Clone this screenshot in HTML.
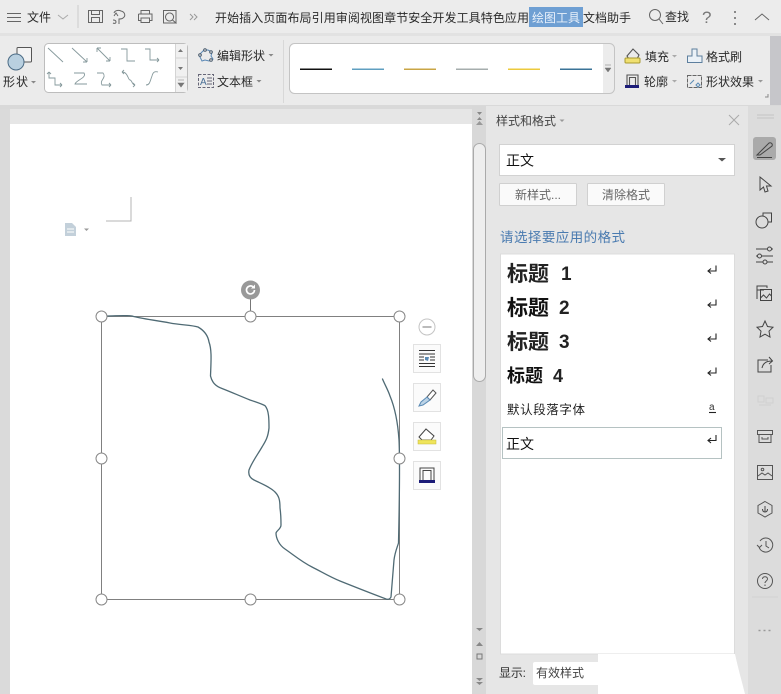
<!DOCTYPE html>
<html><head><meta charset="utf-8">
<style>
html,body{margin:0;padding:0;background:#fff}
svg{display:block;width:781px;height:694px}
text{font-family:"Liberation Sans","Noto Sans CJK SC",sans-serif;font-size:12px;fill:#2a2a2a}
.i{fill:none;stroke:#666;stroke-width:1}
.l{fill:none;stroke:#86999c;stroke-width:.9}
.s{fill:none;stroke:#555;stroke-width:1.1}
</style></head><body>
<svg xmlns="http://www.w3.org/2000/svg" width="781" height="694" viewBox="0 0 781 694">
<!-- backgrounds -->
<rect width="781" height="694" fill="#dedede"/>
<rect width="781" height="33" fill="#ececec"/>
<rect y="33" width="781" height="3" fill="#e2e2e2"/>
<rect y="36" width="781" height="69" fill="#ebebeb"/>
<rect y="105" width="781" height="4" fill="#d9d9d9"/>
<rect y="109" width="472" height="15" fill="#e6e6e6"/>
<rect y="109" width="10" height="585" fill="#dadada"/>
<rect x="770" y="36" width="11" height="69" fill="#c6c6ca"/>
<rect x="10" y="124" width="462" height="570" fill="#fff"/>
<rect x="472" y="106" width="14" height="588" fill="#d8d8d8"/>
<rect x="486" y="106" width="262" height="588" fill="#e6e6e6"/>
<rect x="748" y="106" width="33" height="588" fill="#dcdcdc"/>

<!-- title row -->
<path class="i" d="M7 13.500H21M7 17.500H21M7 21.500H21"/>
<text x="27" y="21.500">文件</text>
<path d="M58 15l5 4 5-4" fill="none" stroke="#aaa"/>
<path d="M78 5V28" stroke="#ccc"/>
<path class="i" d="M88.500 10.500H102.500V22.500H88.500ZM91.500 10.500V14.500H99.500V10.500M91.500 22.500V17.500H99.500V22.500"/>
<path class="i" d="M114 13c1-3 5-3 7-2 4 1 5 5 2 7-1 1-3 1-4 1v5M114 16l2-3 2 3M113 20c2 0 3 1 3 2s-1 2-3 1"/>
<path class="i" d="M141 14V10.500H149.500V14M138.500 14H152V20.500H149.500M138.500 14V20.500H141M141 18H149.500V22.500H141Z"/>
<path class="i" d="M163.500 10.500H176V23H163.500ZM169.500 13a4 4 0 1 0 .1 0M172.500 20l4 3.500"/>
<path d="M190 14l3 3-3 3M194 14l3 3-3 3" fill="none" stroke="#999"/>
<text x="215" y="22" textLength="314">开始插入页面布局引用审阅视图章节安全开发工具特色应用</text>
<rect x="529" y="7" width="54" height="20" fill="#6e9fd3"/>
<text x="532" y="22" style="fill:#e8f0fa" textLength="48">绘图工具</text>
<text x="583" y="22" textLength="48">文档助手</text>
<circle cx="655" cy="15" r="5.500" class="i"/><path class="i" d="M659 19l4 5"/>
<text x="665" y="21" textLength="24">查找</text>
<text x="702" y="23" style="font-size:17px;fill:#777">?</text>
<path d="M735 11v2M735 17v2M735 23v2" stroke="#666" stroke-width="1.500"/>
<path d="M755 20l7-6 7 6" class="i"/>

<!-- shape icon -->
<rect x="17" y="47.500" width="14.500" height="14.500" rx="1" fill="#f3f3f3" stroke="#555"/>
<circle cx="16" cy="62" r="8" fill="#b9d0e0" stroke="#4b6b85"/>
<text x="3" y="86" textLength="25">形状</text>
<path d="M31 81h5l-2.500 2.500z" fill="#888"/>

<!-- shape gallery -->
<rect x="44.500" y="43.500" width="143" height="49" rx="4" fill="#fff" stroke="#bdbdbd"/>
<rect x="176" y="44" width="11" height="48" fill="#f0f0f0"/>
<path d="M175.500 44V92M176 58H187M176 77H187" stroke="#d4d4d4"/>
<path d="M178 52h5l-2.500-3zM178 67h5l-2.500 3z" fill="#777"/>
<path d="M178 80h6M178 83h6l-3 4z" fill="#777" stroke="#777" stroke-width=".6"/>
<path class="l" d="M48 48L63 62"/>
<path class="l" d="M72 48L87 62M87 62v-4M87 62h-4"/>
<path class="l" d="M97 48L110 61M97 48h4M97 48v4M110 61h-4M110 61v-4"/>
<path class="l" d="M121 49H127V61H135"/>
<path class="l" d="M145 49H150V60H159M159 60l-2-2M159 60l-2 2"/>
<path class="l" d="M49 72V78H55V85H62M49 72l-2 2M49 72l2 2M62 85l-2-2M62 85l-2 2"/>
<path class="l" d="M74 73H84C87 78 76 80 75 84H87"/>
<path class="l" d="M97 73H103C107 78 99 80 102 85H111M111 85l-2-2M111 85l-2 2"/>
<path class="l" d="M122 72C128 72 128 80 130 80C132 80 132 85 135 85M122 72l2-2M122 72l2 2M135 85l-2-2M135 85l-2 2"/>
<path class="l" d="M146 85C150 85 150 81 152 76C153 72 155 71 158 72"/>

<!-- edit shape / text box -->
<path d="M199 55l5-5 4 0 4 2-1 4 2 3-4 2-4-1-3 1z" fill="none" stroke="#5a88b5"/>
<circle cx="200" cy="55" r="1.300" fill="#fff" stroke="#456"/><circle cx="205" cy="50" r="1.300" fill="#fff" stroke="#456"/><circle cx="211" cy="52" r="1.300" fill="#fff" stroke="#456"/><circle cx="211" cy="60" r="1.300" fill="#fff" stroke="#456"/>
<text x="217" y="60" textLength="48">编辑形状</text>
<path d="M268.500 54h5l-2.500 2.500z" fill="#888"/>
<rect x="198.500" y="74.500" width="15" height="13" fill="none" stroke="#667" stroke-dasharray="3 1.500"/>
<text x="200" y="85" style="font-size:10px;fill:#4a6f96">A</text>
<path d="M207 78h5M207 81h5M207 84h5" stroke="#667"/>
<text x="217" y="86" textLength="36">文本框</text>
<path d="M256.500 80h5l-2.500 2.500z" fill="#888"/>
<path d="M283.500 40V103" stroke="#d8d8d8"/>

<!-- line gallery -->
<rect x="289.500" y="43.500" width="325" height="50" rx="5" fill="#ececec" stroke="#c4c4c4"/>
<path d="M603 44H295a5 5 0 0 0-5 5V88a5 5 0 0 0 5 5H603Z" fill="#fff"/>
<path d="M605 65h6M605 68h6l-3 4z" fill="#777" stroke="#777" stroke-width=".5"/>
<rect x="300" y="68.500" width="32" height="1.500" fill="#111"/>
<rect x="352" y="68.500" width="32" height="1.500" fill="#5f9fc0"/>
<rect x="404" y="68.500" width="32" height="1.500" fill="#c9a545"/>
<rect x="456" y="68.500" width="32" height="1.500" fill="#a5adad"/>
<rect x="508" y="68.500" width="32" height="1.500" fill="#ecca3c"/>
<rect x="560" y="68.500" width="32" height="1.500" fill="#3a7397"/>

<!-- fill / outline -->
<path class="s" d="M627 56l6-7 6 6-2 4h-8z"/>
<rect x="625" y="58" width="15" height="5" rx="1" fill="#f0e070" stroke="#a89a30"/>
<text x="645" y="61" textLength="24">填充</text>
<path d="M672 55h5l-2.500 2.500z" fill="#aaa"/>
<path d="M687.500 62.500V56H692V49H697V56H702V62.500Z" fill="#eaf1f7" stroke="#5d7f9e"/>
<text x="706" y="61" textLength="36">格式刷</text>
<path class="s" d="M627 85V75H638V85"/><path class="s" d="M629.500 85V77.500H635.500V85"/>
<rect x="625" y="85" width="14" height="3" fill="#1c1c78"/>
<text x="644" y="86" textLength="24">轮廓</text>
<path d="M672 80h5l-2.500 2.500z" fill="#aaa"/>
<rect x="687.500" y="75.500" width="14" height="12" fill="none" stroke="#666" stroke-dasharray="4 1"/>
<path d="M690 84l4-4M696 85l2-2 2 2-2 2z" stroke="#5b8bb5" fill="none"/>
<text x="706" y="86" textLength="48">形状效果</text>
<path d="M758 80h5l-2.500 2.500z" fill="#999"/>
<path d="M765 97h3v-3" fill="none" stroke="#888"/>

<!-- document marks -->
<path d="M131 197V221H106" fill="none" stroke="#b4b4b4"/>
<path d="M65 223H72L76 227V236H65Z" fill="#c3d0da"/>
<path d="M67 229h7M67 232h7" stroke="#fff"/>
<path d="M84 228.500h5l-2.500 2.500z" fill="#999"/>

<!-- selection -->
<rect x="101.500" y="316.500" width="298" height="283" fill="none" stroke="#808080" stroke-width="1"/>
<path d="M250.500 297V316" stroke="#777"/>
<circle cx="250.500" cy="290" r="9.500" fill="#999"/>
<path d="M254.500 290a4 4 0 1 1-1.500-3.200" fill="none" stroke="#fff" stroke-width="1.700"/>
<path d="M255 284.500v4h-4z" fill="#fff"/>
<path d="M106 316C115 316 125 315 132 316C142 319 155 320 170 323C180 325 192 325 198 327C205 331 208 336 209 342C212 350 211 362 210.500 376C212 382 215 386 222 388.500C231 392 240 396 250 400C256 402 262 404 265 405.700C269 410 269 420 269 428C268 438 265 442 262 447C258 454 252 462 249 470C248 475 250 478 254 480C262 484 270 487 275 492C279 496 280 500 280 508C281 515 281 520 281 525C281 529 277 530 276 533C276 538 279 545 285 549C295 556 302 562 312 567C322 572 330 577 340 581C355 587 370 593 387 599.300C389 599.500 390 599 391 597C392 585 393 572 394 560C395 552 397 548 398.500 543C399 520 399.500 495 399.500 470C399.500 460 399.500 450 399 440C398 425 395 408 390 396C388 390 385 385 382.500 379" fill="none" stroke="#4f6a74" stroke-width="1.300" stroke-linecap="round"/>
<g fill="#fff" stroke="#888" stroke-width="1">
<circle cx="101.500" cy="316.500" r="5.500"/><circle cx="250.500" cy="316.500" r="5.500"/><circle cx="399.500" cy="316.500" r="5.500"/>
<circle cx="101.500" cy="458.500" r="5.500"/><circle cx="399.500" cy="458.500" r="5.500"/>
<circle cx="101.500" cy="599.500" r="5.500"/><circle cx="250.500" cy="599.500" r="5.500"/><circle cx="399.500" cy="599.500" r="5.500"/>
</g>

<!-- float toolbar -->
<circle cx="427" cy="327" r="8" fill="#fff" stroke="#c4c4c4"/><path d="M422.500 327H431.500" stroke="#aaa" stroke-width="1.600"/>
<g fill="#fbfbfb" stroke="#e2e2e2"><rect x="413.500" y="344.500" width="27" height="28"/><rect x="413.500" y="383.500" width="27" height="28"/><rect x="413.500" y="422.500" width="27" height="28"/><rect x="413.500" y="461.500" width="27" height="28"/></g>
<path d="M419 350.500H435M419 354H435M419 357H424M430 357H435M419 360H424M430 360H435M419 363.500H435M419 366.500H435" stroke="#333"/>
<path d="M425 357l4 0-1 4-3-1z" fill="#5b8bb5"/>
<path d="M433 390l3 3-6 7-3-3z" fill="#fff" stroke="#555"/><path d="M427 397l3 3-7 5-4 1 2-4z" fill="#bcd3e6" stroke="#5b8bb5"/>
<path d="M419 437l7-8 8 7-3 4h-9z" fill="#fff" stroke="#444"/><rect x="418" y="440" width="18" height="4" fill="#efe45a" stroke="#c3b83a" stroke-width=".5"/>
<path d="M420 480V468H434V480M423 480V470.500H431V480" fill="none" stroke="#444"/><rect x="419" y="480" width="16" height="3" fill="#1c1c78"/>

<!-- doc scrollbar -->
<path d="M477 112h5l-2.500 3zM477 120h5l-2.500-3z" fill="#888"/>
<path d="M476 125h7l-3.500-4z" fill="#999"/>
<rect x="473.500" y="143.500" width="12" height="238" rx="6" fill="#eee" stroke="#aaa"/>
<path d="M476 628h7l-3.500 3zM476 646h7l-3.500-4z" fill="#888"/>
<rect x="477" y="654" width="5" height="5" fill="none" stroke="#777"/>
<path d="M476 678h7l-3.500 3zM476 682h7l-3.500 3z" fill="#888"/>

<!-- panel -->
<text x="496" y="125" textLength="60" style="fill:#444">样式和格式</text>
<path d="M559.500 119.500h5l-2.500 2.500z" fill="#999"/>
<path d="M729 115l10 10M739 115l-10 10" stroke="#aaa"/>
<rect x="499.500" y="144.500" width="235" height="31" fill="#fff" stroke="#d2d2d2"/>
<text x="506" y="165.500" style="font-size:14px;fill:#111">正文</text>
<path d="M718 158h8l-4 3.500z" fill="#555"/>
<rect x="499.500" y="183.500" width="77" height="22" rx="1" fill="#fafafa" stroke="#d0d0d0"/>
<rect x="587.500" y="183.500" width="77" height="22" rx="1" fill="#fafafa" stroke="#d0d0d0"/>
<text x="515" y="199" textLength="46" style="fill:#666">新样式...</text>
<text x="602" y="199" textLength="48" style="fill:#666">清除格式</text>
<text x="500" y="242" textLength="125" style="font-size:13.500px;fill:#4a7bb0">请选择要应用的格式</text>
<rect x="500.500" y="254" width="234" height="400" fill="#fff" stroke="#dcdcdc"/>
<text x="507" y="281" style="font-size:21px;font-weight:bold;fill:#222">标题</text><text x="561" y="280" style="font-size:19px;font-weight:bold;fill:#222">1</text>
<text x="507" y="315" style="font-size:21px;font-weight:bold;fill:#111">标题</text><text x="559" y="314" style="font-size:19px;font-weight:bold;fill:#222">2</text>
<text x="507" y="349" style="font-size:21px;font-weight:bold;fill:#222">标题</text><text x="559" y="348" style="font-size:19px;font-weight:bold;fill:#222">3</text>
<text x="507" y="382" style="font-size:18px;font-weight:bold;fill:#111">标题</text><text x="553" y="382" style="font-size:18px;font-weight:bold;fill:#222">4</text>
<text x="507" y="414" textLength="78" style="font-size:12.500px;fill:#222">默认段落字体</text>
<rect x="502.500" y="427.500" width="219" height="31" fill="#fff" stroke="#b5c2c2"/>
<text x="506" y="449" style="font-size:14px;fill:#111">正文</text>
<g fill="none" stroke="#222" stroke-width="1.100">
<path d="M716 265.500V271H708M711 268.500l-3 2.500 3 2.500"/>
<path d="M716 299.500V305H708M711 302.500l-3 2.500 3 2.500"/>
<path d="M716 333.500V339H708M711 336.500l-3 2.500 3 2.500"/>
<path d="M716 367.500V373H708M711 370.500l-3 2.500 3 2.500"/>
<path d="M716 435V440.500H708M711 438l-3 2.500 3 2.500"/>
<path d="M709 412.500H716"/>
</g>
<text x="709" y="410" style="font-size:10px;fill:#333">a</text>

<!-- bottom -->
<text x="499" y="677" textLength="27" style="fill:#333">显示:</text>
<path d="M598 654H735C738 668 742 682 745 694H598Z" fill="#fff"/>
<rect x="533" y="662" width="70" height="23" rx="2" fill="#fff"/>
<text x="536" y="677" textLength="48" style="fill:#444">有效样式</text>

<!-- sidebar -->
<path d="M757 115H774M757 118H774" stroke="#c4c4c4"/>
<rect x="753" y="137" width="23" height="23" rx="3" fill="#aaa"/>
<g fill="none" stroke="#444">
<path d="M757 155L769 143C771 142 773 144 772 146L760 155ZM757 157.500H772"/>
<path d="M760 177L760 190L763.500 187L765 192L768 191L766.500 186H771Z"/>
<circle cx="762" cy="222" r="6"/><path d="M763 216V213H771.500V222H767.500"/>
<path d="M756 249H768M771.500 249H773M756 256H758M761 256H773M756 262H763M767 262H773"/><circle cx="769.500" cy="249" r="2"/><circle cx="759.500" cy="256" r="2"/><circle cx="765" cy="262" r="2"/>
<path d="M757 299V286H767V288M757 290H764"/><rect x="760.500" y="289.500" width="11" height="11"/><path d="M760.500 298l3-3 3 3 3-4 2 2"/>
<path d="M765 321l2.500 5.500 5.500.7-4 4 1 5.800-5-2.800-5 2.800 1-5.800-4-4 5.500-.7z"/>
<path d="M768 360H758V372H771V365M762 368c1-5 5-7 10-7M769 357l3.500 4-3.500 3"/>
</g>
<g fill="none" stroke="#d0d0d0"><path d="M758 396h6v6h-6zM766 398h7v5h-7zM759 405h12"/></g>
<g fill="none" stroke="#555">
<path d="M757.500 430.500H772.500V434.500H757.500ZM759 434.500V442.500H771V434.500M762 437V439H768V437"/>
<rect x="757.500" y="465.500" width="15" height="14"/><path d="M758 476l4-3 3 2 3-2 4 3"/><circle cx="762.500" cy="469.500" r="1.300"/>
<path d="M765 501.500L772 505.500V513L765 517L758 513V505.500Z"/><path d="M765 506V512M762.500 509c0 2 1 3 2.500 3s2.500-1 2.500-3" stroke="#444"/>
<path d="M760 541a7 7 0 1 1-1 6M757 545l2.500 2.500 2.500-2.500M766 541V546L769 548"/>
<circle cx="765" cy="581" r="7.500"/><path d="M762.500 579c0-3 5-3 5 0 0 2-2.500 2-2.500 4M765 584.500v1.500"/>
</g>
<path d="M752 597H778" stroke="#d2d2d2"/>
<path d="M758.500 630.500h2M763.500 630.500h2M768.500 630.500h2" stroke="#999" stroke-width="1.500"/>
</svg>
</body></html>
